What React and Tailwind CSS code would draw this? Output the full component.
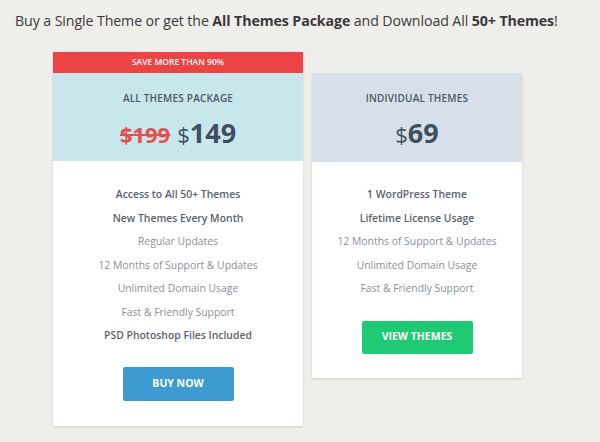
export default function App() {
  const allFeatures = [
    { label: "Access to All 50+ Themes", bold: true },
    { label: "New Themes Every Month", bold: true },
    { label: "Regular Updates" },
    { label: "12 Months of Support & Updates" },
    { label: "Unlimited Domain Usage" },
    { label: "Fast & Friendly Support" },
    { label: "PSD Photoshop Files Included", bold: true },
  ];
  const singleFeatures = [
    { label: "1 WordPress Theme", bold: true },
    { label: "Lifetime License Usage", bold: true },
    { label: "12 Months of Support & Updates" },
    { label: "Unlimited Domain Usage" },
    { label: "Fast & Friendly Support" },
  ];

  const Feature = ({ f }) => (
    <li
      className={`h-[23.5px] leading-[23.5px] text-[10.4px] ${
        f.bold ? "font-semibold text-[#5b616d]" : "text-[#8b9099]"
      }`}
    >
      {f.label}
    </li>
  );

  return (
    <div
      className="w-[600px] h-[442px] bg-[#efeeeb] overflow-hidden"
      style={{ fontFamily: "'Open Sans', 'Liberation Sans', sans-serif" }}
    >
      <h1 className="pl-[15px] pt-[11px] text-[14.2px] leading-[20px] text-[#3a3a3a] tracking-[-0.1px]">
        Buy a Single Theme or get the <b>All Themes Package</b> and Download All{" "}
        <b>50+ Themes</b>!
      </h1>

      <div className="flex items-start pl-[53px] pt-[21px] gap-[9px]">
        {/* all themes */}
        <div className="w-[250px] bg-white shadow-sm">
          <div className="h-[21px] bg-[#ec4444] text-white text-[8.5px] font-semibold uppercase flex items-center justify-center">
            Save more than 90%
          </div>
          <div className="h-[88px] bg-[#c9e6ec] flex flex-col items-center pt-[18px]">
            <div className="text-[10px] font-semibold uppercase text-[#4b5866] tracking-[0.2px]">
              All Themes Package
            </div>
            <div className="mt-[7px] flex items-baseline gap-[7px]">
              <span className="text-[22px] font-bold text-[#e0504c] line-through decoration-2">
                $199
              </span>
              <span className="text-[#3e4f5e]">
                <span className="text-[22px] font-normal">$</span>
                <span className="text-[27px] font-bold">149</span>
              </span>
            </div>
          </div>
          <div className="flex flex-col items-center pt-[22px] pb-[25px]">
            <ul className="text-center">
              {allFeatures.map((f) => (
                <Feature key={f.label} f={f} />
              ))}
            </ul>
            <button className="mt-[19px] w-[111px] h-[34px] bg-[#3d9bd1] text-white text-[10.5px] font-bold uppercase rounded-[2px]">
              Buy Now
            </button>
          </div>
        </div>

        {/* individual */}
        <div className="w-[210px] mt-[21px] bg-white shadow-sm">
          <div className="h-[89px] bg-[#d7e0ea] flex flex-col items-center pt-[18px]">
            <div className="text-[10px] font-semibold uppercase text-[#4b5866] tracking-[0.2px]">
              Individual Themes
            </div>
            <div className="mt-[7px] text-[#3e4f5e]">
              <span className="text-[22px] font-normal">$</span>
              <span className="text-[27px] font-bold">69</span>
            </div>
          </div>
          <div className="flex flex-col items-center pt-[21px] pb-[24px]">
            <ul className="text-center">
              {singleFeatures.map((f) => (
                <Feature key={f.label} f={f} />
              ))}
            </ul>
            <button className="mt-[20px] w-[111px] h-[33px] bg-[#1ecb74] text-white text-[10.5px] font-bold uppercase rounded-[2px]">
              View Themes
            </button>
          </div>
        </div>
      </div>
    </div>
  );
}
